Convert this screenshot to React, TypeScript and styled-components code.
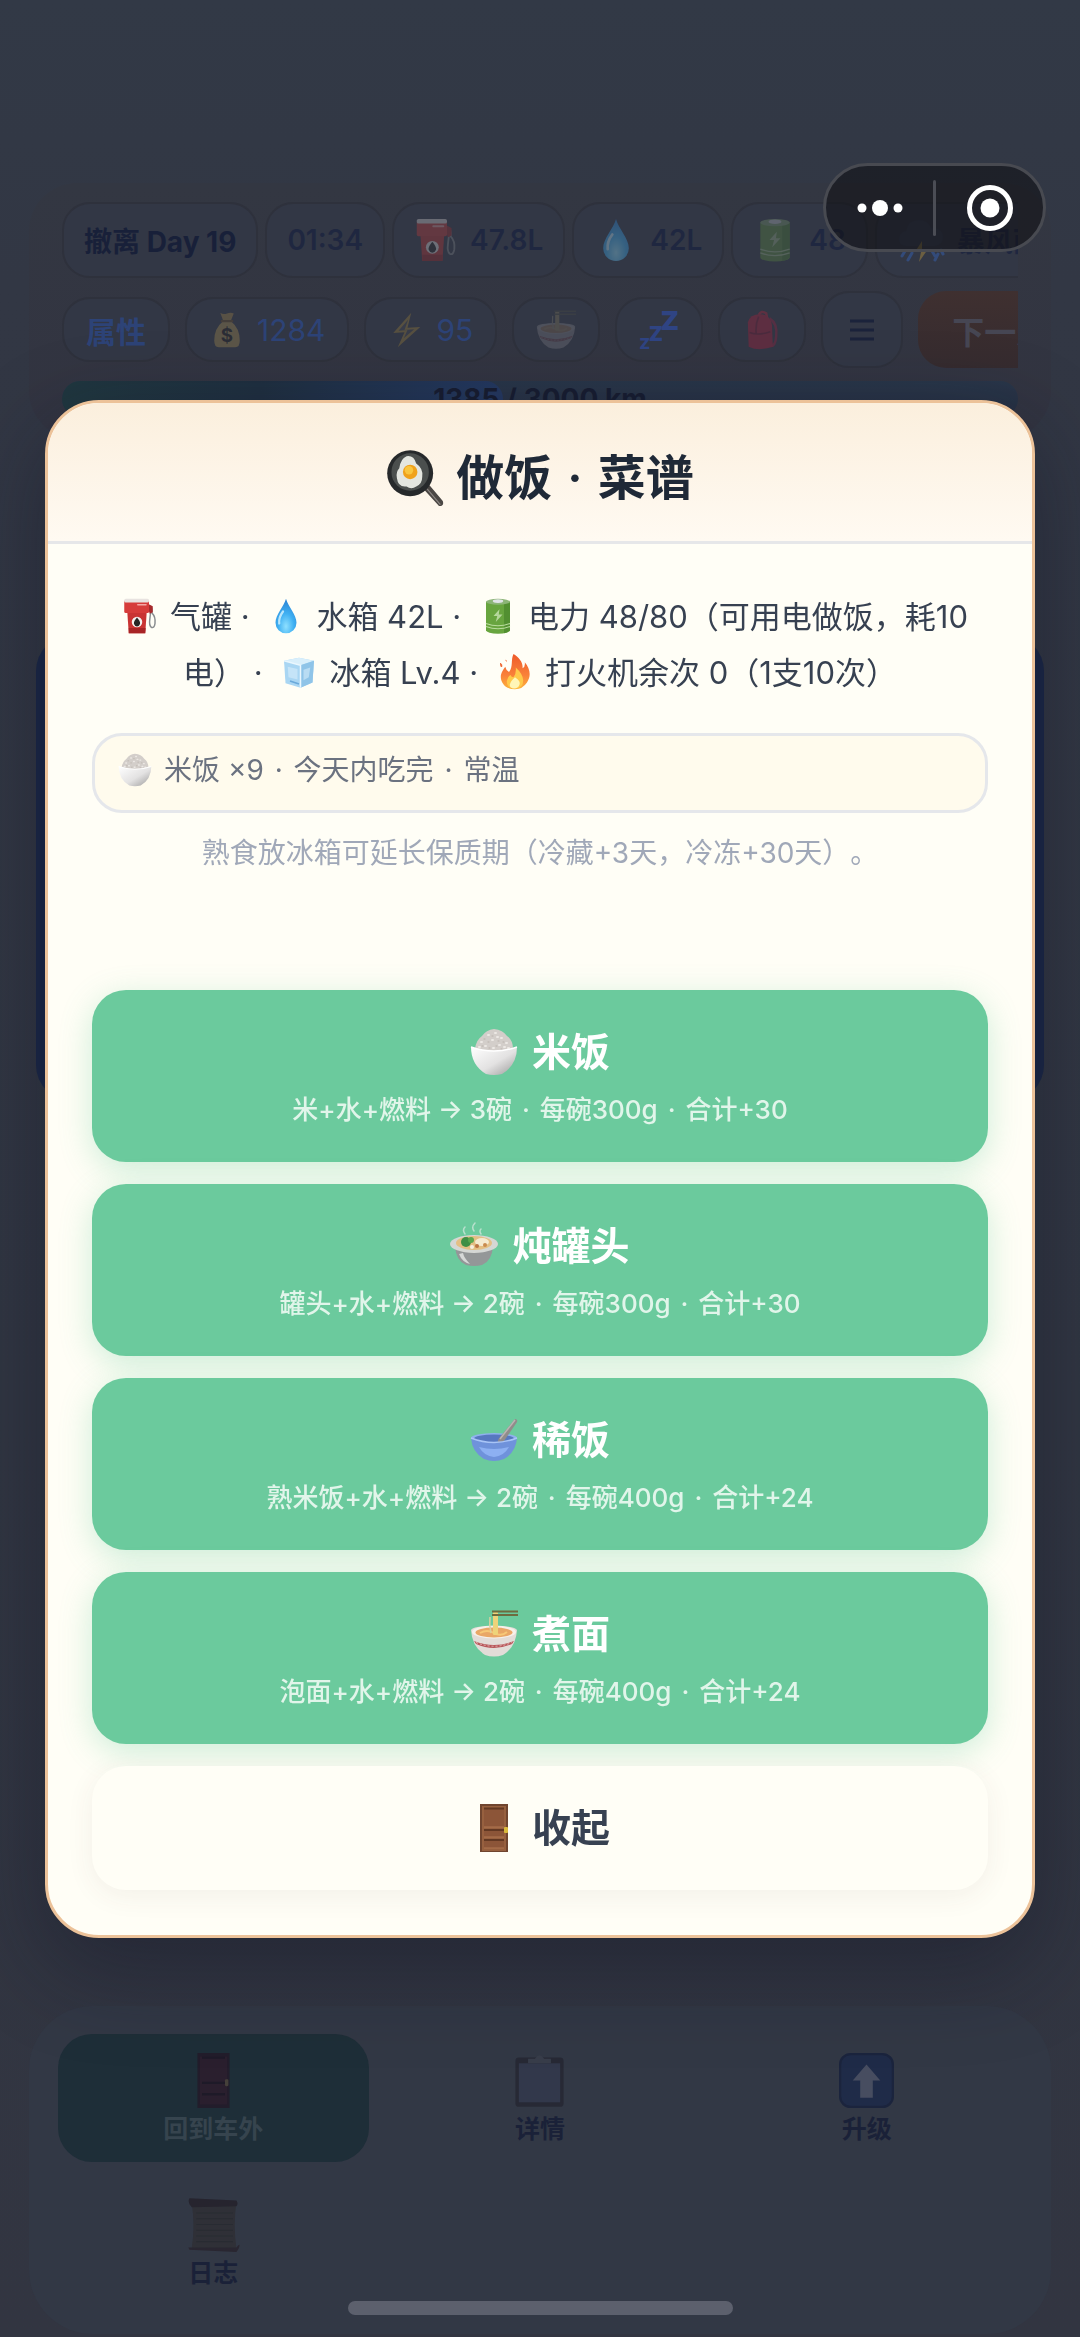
import React from "react";
import styled, { createGlobalStyle } from "styled-components";

const Global = createGlobalStyle`
  *, *::before, *::after { box-sizing: border-box; }
  body {
    margin: 0;
    background: #323845;
    font-family: Inter, "Noto Sans CJK SC", sans-serif;
    text-spacing-trim: space-all;
  }
  button { font-family: inherit; border: 0; margin: 0; padding: 0; cursor: pointer; }
`;

/* ---------- icons ---------- */

const Svg = styled.svg<{ $size: number; $dim?: number }>`
  display: block;
  flex: none;
  width: ${(p) => p.$size}px;
  height: ${(p) => p.$size}px;
  opacity: ${(p) => p.$dim ?? 1};
`;

type IconProps = { size: number; dim?: number; className?: string };

const Icon = ({ size, dim, className, children }: IconProps & { children: React.ReactNode }) => (
  <Svg $size={size} $dim={dim} className={className} viewBox="0 0 48 48" aria-hidden="true">
    {children}
  </Svg>
);

const FuelIcon = (p: IconProps) => (
  <Icon {...p}>
    <path d="M35 10 q5 1 5 6 v4 q5 5 4 14 q-1 7 -5 5 q-3 -3 -2 -10 l1 -9" fill="none" stroke="#8a8d90" strokeWidth="2" />
    <path d="M35 8 l6 3 v8 l-4 2 l-2 -6z" fill="#a72a2c" />
    <path d="M7 18 H33 L31 47 H9z" fill="#c93433" />
    <path d="M9 40 H31.500 L31 47 H9z" fill="#a82426" />
    <rect x="3" y="3" width="33" height="17" rx="2" fill="#d63c3a" />
    <rect x="3" y="1" width="33" height="5" rx="2" fill="#e8e3e0" />
    <rect x="20" y="8" width="13" height="2" rx="1" fill="#f3a9a5" />
    <circle cx="20" cy="32" r="7" fill="#f4f1ee" />
    <path d="M20 26 q5 6 4 8.500 q-1.500 3.500 -4 3.500 t-4 -3.500 q-1 -2.500 4 -8.500z" fill="#252525" />
  </Icon>
);

const DropIcon = (p: IconProps) => (
  <Icon {...p}>
    <defs>
      <radialGradient id="drop" cx="50%" cy="80%" r="75%">
        <stop offset="0" stopColor="#8fe0ff" />
        <stop offset="0.5" stopColor="#3fb0f2" />
        <stop offset="1" stopColor="#2d86d6" />
      </radialGradient>
    </defs>
    <path d="M24 1 C27 12 38 22 38 33 A14 14 0 0 1 10 33 C10 22 21 12 24 1z" fill="url(#drop)" />
    <path d="M20 18 q-6 8 -5 16" fill="none" stroke="#b9e6fc" strokeWidth="3" strokeLinecap="round" />
  </Icon>
);

const BatteryIcon = (p: IconProps) => (
  <Icon {...p}>
    <path d="M8 5 V43 A16 4.500 0 0 0 40 43 V5z" fill="#68a53f" />
    <path d="M32 5 H40 V43 q-3 3 -8 4z" fill="#528f31" />
    <ellipse cx="24" cy="5" rx="16" ry="4" fill="#8cb577" />
    <ellipse cx="24" cy="4" rx="7" ry="2.500" fill="#dfe3e6" />
    <path d="M8 34 q16 6 32 0 M8 38 q16 6 32 0" fill="none" stroke="#b9dc9d" strokeWidth="1.500" />
    <path d="M26 15 L18 24 H23 L21 32 L30 22 H25z" fill="#b5d79b" />
  </Icon>
);

const PanIcon = (p: IconProps) => (
  <Icon {...p}>
    <path d="M31 33 L36 30 L47 43 q1 3 -1 4 q-2 1 -4 -2z" fill="#4b4744" />
    <path d="M34 33 L45 46" stroke="#8b8683" strokeWidth="1" />
    <ellipse cx="20" cy="20" rx="19" ry="19" fill="#26292b" />
    <ellipse cx="20" cy="19" rx="15.500" ry="15.500" fill="#4b4f4e" />
    <path d="M17 6 q6 -1 8 6 q6 4 5 11 q0 6 -5 8 q-4 3 -8 0 q-7 1 -8 -7 q-1 -5 2 -8 q1 -8 6 -10z" fill="#e4e6e0" />
    <circle cx="20" cy="19" r="6" fill="#f0a21c" />
    <circle cx="19" cy="17.500" r="3.500" fill="#f9c640" />
  </Icon>
);

const IceIcon = (p: IconProps) => (
  <Icon {...p}>
    <path d="M4 9 L24 5 L44 9 L42 38 L26 45 L6 39z" fill="#a9d6f3" />
    <path d="M4 9 L24 5 L44 9 L26 15z" fill="#d9effb" />
    <path d="M26 15 L44 9 L42 38 L26 45z" fill="#8fc4e8" />
    <path d="M9 17 L22 20 V34 L10 31z" fill="#c5e4f8" />
    <path d="M30 21 L39 18 L37 31 L30 35z" fill="#b9dcf3" />
    <path d="M4 9 L26 15 V45" fill="none" stroke="#eaf7fe" strokeWidth="2" />
    <path d="M12 36 L24 40" stroke="#6aa9da" strokeWidth="2" />
  </Icon>
);

const FireIcon = (p: IconProps) => (
  <Icon {...p}>
    <defs>
      <linearGradient id="fire" x1="0" y1="0" x2="0" y2="1">
        <stop offset="0" stopColor="#ee5a2a" />
        <stop offset="0.600" stopColor="#f9813a" />
        <stop offset="1" stopColor="#fdb43c" />
      </linearGradient>
    </defs>
    <path d="M22 0 C30 5 35 12 34 19 Q38 17 37 11 C44 19 46 29 40 38 Q34 47 24 47 Q12 47 7 38 C2 28 8 22 11 17 Q12 22 16 24 C22 17 18 8 22 0z" fill="url(#fire)" />
    <path d="M5 12 q3 2 2 5 q-3 2 -3 -5z M11 8 q2 -1 2 3z" fill="#ef6a35" />
    <path d="M25 18 q9 8 10 17 q0 11 -11 11 q-11 0 -11 -10 q1 -6 5 -8 q1 3 4 3 q4 -5 3 -13z" fill="#ffc94a" />
    <path d="M24 31 q8 5 6 10 q-2 5 -7 5 q-6 0 -6 -5 q1 -5 7 -10z" fill="#fff6b8" />
  </Icon>
);

const RiceIcon = (p: IconProps) => (
  <Icon {...p}>
    <defs>
      <linearGradient id="bowl" x1="0" y1="0" x2="1" y2="1">
        <stop offset="0" stopColor="#ffffff" />
        <stop offset="0.550" stopColor="#e3e2e2" />
        <stop offset="1" stopColor="#9a9999" />
      </linearGradient>
    </defs>
    <path d="M5 21 Q6 12 12 8 Q16 2 24 1 Q33 2 37 8 Q43 12 43 21 Q24 30 5 21z" fill="#d3ceca" />
    <path d="M11 14h1 M18 7h1 M25 5h1 M31 10h1 M22 12h1 M15 18h1 M29 17h1 M36 15h1 M23 20h1 M9 19h1 M38 20h1 M34 19h1 M27 9h1" stroke="#ece8e4" strokeWidth="2" strokeLinecap="round" />
    <path d="M14 11h1 M22 8h1 M28 13h1 M18 14h1 M33 14h1 M26 18h1 M19 20h1 M12 18h1 M31 21h1" stroke="#b9b2ac" strokeWidth="1" strokeLinecap="round" />
    <path d="M1 19 Q24 27 47 19 Q47 37 32 46 Q24 48 16 46 Q1 37 1 19z" fill="url(#bowl)" />
    <path d="M1 19 Q24 27 47 19" fill="none" stroke="#ffffff" strokeWidth="1.500" />
  </Icon>
);

const StewIcon = (p: IconProps) => (
  <Icon {...p}>
    <path d="M15 12 q-3 -4 0 -7 M24 9 q-3 -4 1 -8 M31 12 q-2 -3 0 -5" fill="none" stroke="#b9e0cd" strokeWidth="1.500" strokeLinecap="round" />
    <path d="M5 24 H43 Q42 39 32 43 Q24 45 16 43 Q6 39 5 24z" fill="#949798" />
    <path d="M9 32 Q12 40 20 42 Q14 36 13 31z" fill="#d6d8d7" />
    <ellipse cx="24" cy="22" rx="24" ry="9" fill="#d5d7d4" />
    <ellipse cx="24" cy="21" rx="18" ry="7" fill="#e4bf84" />
    <ellipse cx="32" cy="20" rx="7" ry="4" fill="#f5ead0" />
    <circle cx="16" cy="20" r="5" fill="#3f8f45" />
    <circle cx="21" cy="18" r="3" fill="#5aa84e" />
    <circle cx="27" cy="24" r="2" fill="#bc7444" />
    <circle cx="35" cy="23" r="2" fill="#c98b4f" />
    <circle cx="22" cy="25" r="2" fill="#f7efe0" />
  </Icon>
);

const SpoonBowlIcon = (p: IconProps) => (
  <Icon {...p}>
    <ellipse cx="24" cy="22" rx="23" ry="5" fill="#8fb0ee" />
    <ellipse cx="24" cy="22.500" rx="20" ry="4" fill="#5778c0" />
    <path d="M45 3 q3 0 2 3 L34 25 q-3 4 -6 2 q-1 -3 2 -6z" fill="#918c8b" />
    <path d="M45 4 L30 23" stroke="#bab5b3" strokeWidth="1.500" />
    <path d="M1 22 Q24 31 47 22 Q46 36 34 43 Q24 47 14 43 Q2 36 1 22z" fill="#6f92db" />
    <path d="M9 31 Q24 35 39 31 Q34 40 24 41 Q14 40 9 31z" fill="#8db0f2" />
    <path d="M1 22 Q24 31 47 22" fill="none" stroke="#a8c4f6" strokeWidth="1.500" />
  </Icon>
);

const NoodleIcon = (p: IconProps) => (
  <Icon {...p}>
    <path d="M1 20 Q3 16 24 16 T47 20 Q46 37 33 45 Q24 48 15 45 Q2 37 1 20z" fill="#e3dcd8" />
    <ellipse cx="24" cy="22" rx="22" ry="6.500" fill="#f6f0ea" />
    <ellipse cx="24" cy="22.500" rx="18.500" ry="5" fill="#e9a767" />
    <path d="M10 23 q7 -4 14 0 t13 -1" fill="none" stroke="#f7c877" strokeWidth="2" />
    <path d="M4 31 Q24 39 44 31 L42 34 Q24 42 6 34z" fill="#b9565a" />
    <path d="M6 32.500 Q24 40 42 32.500" fill="none" stroke="#e2b9b5" strokeWidth="1" strokeDasharray="2 2" />
    <rect x="23" y="2" width="5" height="23" rx="1" fill="#eed37a" />
    <path d="M20 7 q-1 8 1 16" fill="none" stroke="#d9d0a0" strokeWidth="1.500" />
    <path d="M22 1.500 H48 M22 5 H48" stroke="#6e6b3f" strokeWidth="1.800" />
  </Icon>
);

const DoorIcon = (p: IconProps) => (
  <Icon {...p}>
    <rect x="10" y="0" width="28" height="48" fill="#70452f" />
    <rect x="12" y="2" width="24" height="45" fill="#97603f" />
    <path d="M14 4 H34 V23 H14z M14 27 H34 V33 H14z M14 36 H34 V44 H14z" fill="#8c5538" />
    <path d="M14 4.500 H34 M14 26 H34 M14 36 H34" stroke="#623823" strokeWidth="2" />
    <path d="M14 23 H34 M14 33 H34 M14 44 H34" stroke="#b17651" strokeWidth="1" />
    <rect x="34" y="23" width="4" height="6" rx="1" fill="#d9b93c" />
  </Icon>
);

const NightDoorIcon = (p: IconProps) => (
  <Icon {...p}>
    <rect x="10" y="0" width="28" height="48" fill="#221d2b" />
    <rect x="12" y="3" width="24" height="42" fill="#2a1f2e" />
    <path d="M14 26 H34 M14 36 H34 M14 4 H34" stroke="#1e1a28" strokeWidth="2" />
    <rect x="34" y="23" width="3" height="6" rx="1" fill="#45403a" />
  </Icon>
);

const MoneyIcon = (p: IconProps) => (
  <Icon {...p}>
    <path d="M15 1 q4 3 9 1 t9 0 l-4 10 H19z" fill="#a98847" />
    <path d="M18 13 H30 Q41 22 41 38 Q41 47 35 47 H13 Q7 47 7 38 Q7 22 18 13z" fill="#b39651" />
    <path d="M17 12 H31" stroke="#6c4d24" strokeWidth="3" strokeLinecap="round" />
    <text x="24" y="40" textAnchor="middle" fontSize="25" fontWeight="700" fill="#1d1a18">$</text>
  </Icon>
);

const BoltIcon = (p: IconProps) => (
  <Icon {...p}>
    <path d="M31 1 L7 28 L22 27 L13 47 L43 20 L26 21z" fill="#c59b35" />
    <path d="M27 10 L14 25 L26 24 L21 35 L35 23 L22 24z" fill="#4c4d55" />
  </Icon>
);

const SleepIcon = (p: IconProps) => (
  <Icon {...p}>
    <g fill="#2d55d0" fontWeight="700">
      <text x="25" y="24" fontSize="42">z</text>
      <text x="11" y="37" fontSize="32">z</text>
      <text x="0" y="47" fontSize="24">z</text>
    </g>
  </Icon>
);

const BackpackIcon = (p: IconProps) => (
  <Icon {...p}>
    <path d="M33 10 q10 6 8 22 q-1 12 -7 11" fill="none" stroke="#902440" strokeWidth="3" />
    <path d="M20 6 q3 -6 9 -2 l1 5" fill="none" stroke="#a7263d" strokeWidth="3" />
    <path d="M7 15 Q9 5 22 5 Q34 5 36 18 L37 44 Q20 50 8 44z" fill="#a3203b" />
    <path d="M9 27 Q20 31 34 26 M20 8 Q16 17 17 28" fill="none" stroke="#751a33" strokeWidth="2" />
  </Icon>
);

const StormIcon = (p: IconProps) => (
  <Icon {...p}>
    <path d="M9 30 q-8 -1 -7 -8 q1 -6 7 -7 q2 -11 13 -11 q9 0 12 8 q12 0 12 9 q0 8 -8 9z" fill="#35405c" />
    <path d="M25 25 L18 36 H24 L22 46 L31 33 H25z" fill="#d8a93a" />
    <path d="M8 35 l-3 5 M15 37 l-4 7 M35 35 l3 5 M41 38 l-3 6 M44 34 l2 4" stroke="#3670dc" strokeWidth="3" strokeLinecap="round" />
  </Icon>
);

const ClipboardIcon = (p: IconProps) => (
  <Icon {...p}>
    <rect x="3" y="4" width="42" height="43" rx="3" fill="#20202c" />
    <rect x="6" y="9" width="36" height="34" fill="#323850" />
    <path d="M14 9 V5 H20 q4 -6 8 0 H34 V9z" fill="#3c414e" />
  </Icon>
);

const UpIcon = (p: IconProps) => (
  <Icon {...p}>
    <rect x="1" y="1" width="46" height="46" rx="9" fill="#18264a" stroke="#121c3a" strokeWidth="2" />
    <path d="M24 10 L36 24 H29.500 V39 H18.500 V24 H12z" fill="#50566c" />
  </Icon>
);

const ScrollIcon = (p: IconProps) => (
  <Icon {...p}>
    <path d="M5 5 L44 4 Q41 25 44 45 H5 Q8 25 5 5z" fill="#2f3036" />
    <path d="M9 14h32 M9 19h32 M9 24h32 M9 29h32 M9 34h32 M9 39h32" stroke="#282a31" strokeWidth="1" />
    <path d="M3 1 L44 3 q2 3 0 5 L5 9 q-4 -4 -2 -8z" fill="#25222c" />
    <path d="M2 44 H44 q4 -5 2 1 l-2 3 L3 46z" fill="#29252f" />
  </Icon>
);

/* ---------- dimmed game page ---------- */

const Page = styled.main`
  min-height: 100vh;
  display: flex;
  flex-direction: column;
  padding: 183px 29px 3px;
  background: linear-gradient(#323946 0%, #323744 12%, #313642 60%, #323541 100%);
`;

const StatusPanel = styled.header`
  display: flex;
  flex-direction: column;
  gap: 13px;
  padding: 19px 33px 22px;
  border-radius: 48px;
  background: linear-gradient(#333742, #323441);
`;

const Row = styled.div<{ $gap: number }>`
  display: flex;
  align-items: center;
  gap: ${(p) => p.$gap}px;
  overflow: hidden;
`;

const Stat = styled.div<{ $strong?: boolean }>`
  flex: none;
  display: flex;
  align-items: center;
  gap: 12px;
  height: 76px;
  padding: 0 20px;
  border: 2px solid #2e313c;
  border-radius: 28px;
  background: #323745;
  color: ${(p) => (p.$strong ? "#182039" : "#1f2740")};
  font-size: 28px;
  font-weight: ${(p) => (p.$strong ? 700 : 600)};
  white-space: nowrap;
`;

const Chip = styled.button`
  flex: none;
  display: flex;
  align-items: center;
  gap: 12px;
  height: 65px;
  padding: 0 22px;
  border: 2px solid #2e313c;
  border-radius: 28px;
  background: #323745;
  color: #2d4377;
  font-size: 30px;
`;

const ChipLabel = styled.span`
  font-weight: 600;
`;

const MenuButton = styled(Chip)`
  height: 77px;
  width: 82px;
  justify-content: center;
`;

const NextButton = styled.button`
  flex: none;
  height: 77px;
  padding: 0 34px;
  border-radius: 28px;
  background: linear-gradient(#3f3030, #352b2f);
  color: #464653;
  font-size: 32px;
  font-weight: 600;
`;

const Track = styled.div`
  display: grid;
  height: 36px;
  border-radius: 18px;
  overflow: hidden;
  background: linear-gradient(#293649, #262f42);
`;

const Fill = styled.div`
  grid-area: 1 / 1;
  border-radius: 18px;
  background: linear-gradient(90deg, #20373f, #1f2f40 45%, #243860);
`;

const TrackLabel = styled.div`
  grid-area: 1 / 1;
  text-align: center;
  line-height: 36px;
  font-size: 28px;
  font-weight: 700;
  color: #171d31;
`;

const Scene = styled.section`
  margin: 196px 7px 0;
  height: 466px;
  border-radius: 36px;
  background: #1b2747;
`;

const Nav = styled.nav`
  display: grid;
  grid-template-columns: repeat(3, 1fr);
  gap: 16px;
  margin-top: auto;
  padding: 28px 29px;
  border-radius: 64px;
  background: #323845;
`;

const NavButton = styled.button<{ $active?: boolean }>`
  display: flex;
  flex-direction: column;
  align-items: center;
  gap: 2px;
  height: 128px;
  padding-top: 19px;
  border-radius: 34px;
  background: ${(p) => (p.$active ? "#1e2e38" : "transparent")};
  color: ${(p) => (p.$active ? "#36444e" : "#1a2138")};
  font-size: 25px;
  font-weight: 600;
  line-height: 38px;
`;

/* ---------- floating system controls ---------- */

const Capsule = styled.div`
  position: fixed;
  z-index: 3;
  top: 163px;
  right: 34px;
  width: 223px;
  height: 89px;
  display: flex;
  align-items: center;
  border: 3px solid #484a51;
  border-radius: 45px;
  background: rgba(15, 15, 19, 0.55);
`;

const CapsuleButton = styled.button`
  flex: 1;
  height: 83px;
  display: flex;
  align-items: center;
  justify-content: center;
  background: transparent;
`;

const CapsuleLine = styled.span`
  width: 3px;
  height: 56px;
  border-radius: 2px;
  background: #4b4d55;
`;

const HomeBar = styled.div`
  position: fixed;
  z-index: 3;
  left: 50%;
  bottom: 22px;
  width: 385px;
  height: 14px;
  margin-left: -192px;
  border-radius: 7px;
  background: #5c606d;
`;

/* ---------- recipe dialog ---------- */

const Overlay = styled.div`
  position: fixed;
  inset: 0;
  z-index: 2;
  display: flex;
  align-items: center;
  justify-content: center;
  padding: 0 45px;
`;

const Dialog = styled.section`
  width: 100%;
  overflow: hidden;
  border: 3px solid #ecc299;
  border-radius: 54px;
  background: #fffef6;
  box-shadow: 0 30px 90px rgba(15, 17, 35, 0.4);
`;

const DialogHead = styled.header`
  display: flex;
  align-items: center;
  justify-content: center;
  gap: 12px;
  padding: 41px 0 29px;
  border-bottom: 3px solid #e6e7e9;
  background: linear-gradient(#fbefdd, #fffaf2);
`;

const Dot = styled.span`
  margin: 0 3px;
`;

const DialogTitle = styled.h1`
  margin: 0;
  font-size: 48px;
  line-height: 68px;
  font-weight: 600;
  color: #1f2937;
`;

const DialogBody = styled.div`
  padding: 45px 44px;
`;

const Supplies = styled.p`
  margin: 0 0 32px;
  text-align: center;
  font-size: 31px;
  line-height: 56px;
  color: #374151;

  svg {
    display: inline-block;
    vertical-align: -6px;
    margin: 0 12px 0 10px;
  }
`;

const Stored = styled.div`
  display: flex;
  align-items: center;
  gap: 12px;
  padding: 14px 23px 20px;
  border: 3px solid #e5e7eb;
  border-radius: 30px;
  background: #fffbed;
  font-size: 28px;
  line-height: 40px;
  color: #6b7280;
`;

const Hint = styled.p`
  margin: 20px 0 117px;
  text-align: center;
  font-size: 28px;
  line-height: 40px;
  color: #a0a8b8;
`;

const Actions = styled.div`
  display: flex;
  flex-direction: column;
  gap: 22px;
`;

const RecipeButton = styled.button`
  display: flex;
  flex-direction: column;
  align-items: center;
  gap: 12px;
  padding: 34px 0;
  border-radius: 34px;
  background: #6bca9d;
  color: #ffffff;
  box-shadow: 0 8px 32px rgba(90, 200, 150, 0.3);
`;

const ButtonTitle = styled.span`
  display: flex;
  align-items: center;
  gap: 14px;
  font-size: 39px;
  line-height: 56px;
  font-weight: 600;
`;

const ButtonNote = styled.span`
  font-size: 26px;
  line-height: 36px;
  font-weight: 500;
  color: #e1f5ea;
`;

const CloseButton = styled.button`
  display: flex;
  justify-content: center;
  padding: 34px 0;
  border-radius: 34px;
  background: #fffef6;
  color: #374151;
  box-shadow: 0 6px 28px rgba(90, 60, 50, 0.07);
`;

const Dotted = ({ parts }: { parts: string[] }) => (
  <span>
    {parts.map((part, i) => (
      <React.Fragment key={part}>
        {i > 0 && <> <Dot>·</Dot> </>}
        {part}
      </React.Fragment>
    ))}
  </span>
);

const recipes = [
  { icon: RiceIcon, name: "米饭", note: ["米+水+燃料 → 3碗", "每碗300g", "合计+30"] },
  { icon: StewIcon, name: "炖罐头", note: ["罐头+水+燃料 → 2碗", "每碗300g", "合计+30"] },
  { icon: SpoonBowlIcon, name: "稀饭", note: ["熟米饭+水+燃料 → 2碗", "每碗400g", "合计+24"] },
  { icon: NoodleIcon, name: "煮面", note: ["泡面+水+燃料 → 2碗", "每碗400g", "合计+24"] },
];

const distance = { done: 1385, total: 3000 };

export default function App() {
  return (
    <>
      <Global />
      <Page lang="zh-CN">
        <StatusPanel>
          <Row $gap={7}>
            <Stat $strong>撤离 Day 19</Stat>
            <Stat>01:34</Stat>
            <Stat><FuelIcon size={44} dim={0.3} />47.8L</Stat>
            <Stat><DropIcon size={44} dim={0.35} />42L</Stat>
            <Stat><BatteryIcon size={44} dim={0.26} />48</Stat>
            <Stat><StormIcon size={48} dim={0.35} />暴风雨</Stat>
          </Row>
          <Row $gap={15}>
            <Chip><ChipLabel>属性</ChipLabel></Chip>
            <Chip><MoneyIcon size={36} dim={0.32} />1284</Chip>
            <Chip><BoltIcon size={36} dim={0.25} />95</Chip>
            <Chip aria-label="吃饭"><NoodleIcon size={40} dim={0.14} /></Chip>
            <Chip aria-label="睡觉"><SleepIcon size={40} dim={0.45} /></Chip>
            <Chip aria-label="背包"><BackpackIcon size={40} dim={0.38} /></Chip>
            <MenuButton aria-label="菜单">
              <Icon size={24}>
                <path d="M0 6 H48 M0 24 H48 M0 42 H48" stroke="#1b233b" strokeWidth="6" />
              </Icon>
            </MenuButton>
            <NextButton>下一天</NextButton>
          </Row>
          <Track>
            <Fill style={{ width: `${(distance.done / distance.total) * 100}%` }} />
            <TrackLabel>{distance.done} / {distance.total} km</TrackLabel>
          </Track>
        </StatusPanel>
        <Scene />
        <Nav>
          <NavButton $active><NightDoorIcon size={55} />回到车外</NavButton>
          <NavButton><ClipboardIcon size={55} dim={0.6} />详情</NavButton>
          <NavButton><UpIcon size={55} dim={0.7} />升级</NavButton>
          <NavButton><ScrollIcon size={55} dim={0.9} />日志</NavButton>
        </Nav>
      </Page>

      <Overlay lang="zh-CN">
        <Dialog role="dialog" aria-labelledby="dialog-title">
          <DialogHead>
            <PanIcon size={58} />
            <DialogTitle id="dialog-title"><Dotted parts={["做饭", "菜谱"]} /></DialogTitle>
          </DialogHead>
          <DialogBody>
            <Supplies>
              <FuelIcon size={36} />气罐 · <DropIcon size={36} />水箱 42L · <BatteryIcon size={36} />电力 48/80（可用电做饭，耗10电） · <IceIcon size={36} />冰箱 Lv.4 · <FireIcon size={36} />打火机余次 0（1支10次）
            </Supplies>
            <Stored><RiceIcon size={34} /><Dotted parts={["米饭 ×9", "今天内吃完", "常温"]} /></Stored>
            <Hint>熟食放冰箱可延长保质期（冷藏+3天，冷冻+30天）。</Hint>
            <Actions>
              {recipes.map(({ icon: RecipeIcon, name, note }) => (
                <RecipeButton key={name}>
                  <ButtonTitle><RecipeIcon size={48} />{name}</ButtonTitle>
                  <ButtonNote><Dotted parts={note} /></ButtonNote>
                </RecipeButton>
              ))}
              <CloseButton>
                <ButtonTitle><DoorIcon size={48} />收起</ButtonTitle>
              </CloseButton>
            </Actions>
          </DialogBody>
        </Dialog>
      </Overlay>

      <Capsule>
        <CapsuleButton aria-label="更多">
          <Icon size={48}>
            <g fill="#ffffff">
              <circle cx="6" cy="24" r="4.500" />
              <circle cx="24" cy="24" r="8" />
              <circle cx="42" cy="24" r="4.500" />
            </g>
          </Icon>
        </CapsuleButton>
        <CapsuleLine />
        <CapsuleButton aria-label="关闭">
          <Icon size={48}>
            <circle cx="24" cy="24" r="20.500" fill="none" stroke="#ffffff" strokeWidth="5" />
            <circle cx="24" cy="24" r="9.500" fill="#ffffff" />
          </Icon>
        </CapsuleButton>
      </Capsule>
      <HomeBar />
    </>
  );
}
